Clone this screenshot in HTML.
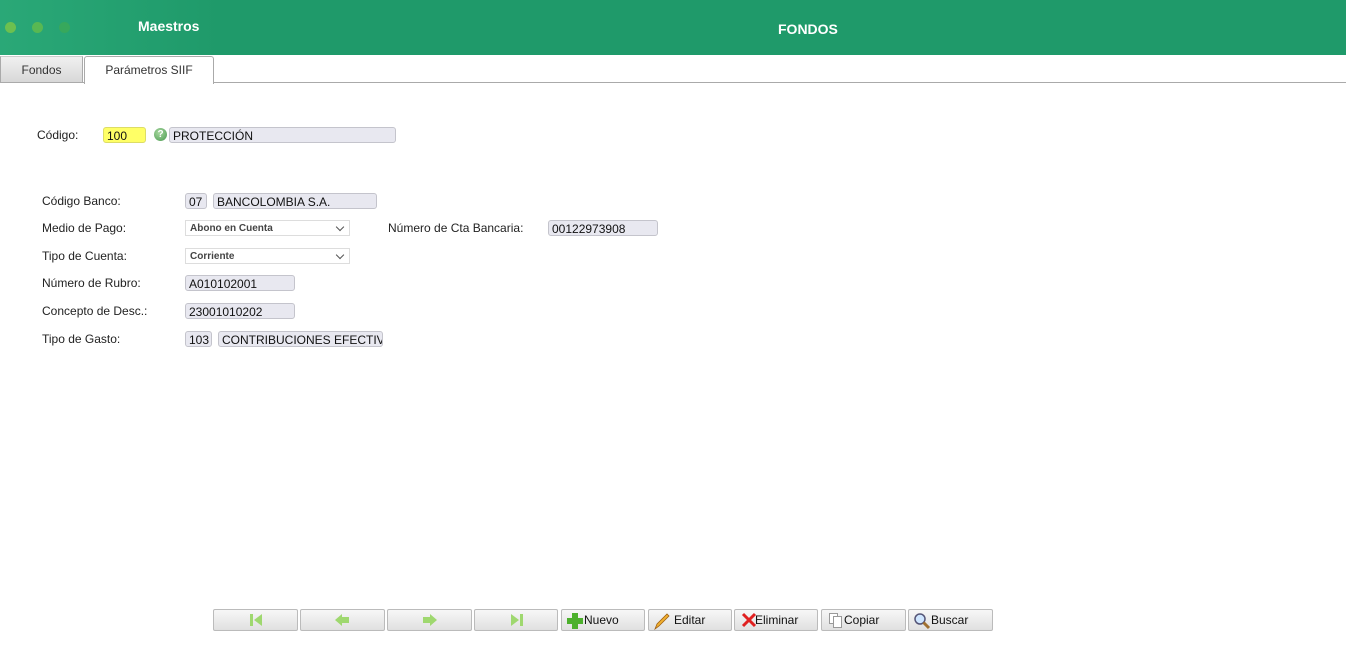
<!DOCTYPE html>
<html><head><meta charset="utf-8"><style>
body{margin:0;width:1346px;height:653px;background:#fff;font-family:"Liberation Sans","DejaVu Sans",sans-serif;font-size:12px;color:#222;position:relative;overflow:hidden}
.hdr{position:absolute;left:0;top:0;width:1346px;height:55px;background:linear-gradient(90deg,#2aa877 0,#1f9a6a 220px,#1f9a6a 100%)}
.dot{position:absolute;top:22px;width:11px;height:11px;border-radius:50%}
.t{position:absolute;color:#fff;font-weight:bold;font-size:14px}
.tab{position:absolute;top:56px;height:27px;line-height:27px;text-align:center;font-size:12px;color:#333;box-sizing:border-box}
.a{position:absolute;white-space:nowrap}
.in{position:absolute;height:16px;line-height:16px;background:#e8e8f0;border:1px solid #c4c4cc;border-radius:3px;box-sizing:border-box;padding-left:3px;font-size:12px;color:#111;white-space:nowrap;overflow:hidden}
.sel{position:absolute;height:16px;line-height:15px;border:1px solid #ddd;box-sizing:border-box;padding-left:4px;font-size:10px;font-weight:bold;color:#444;background:#fff}
.sel:after{content:"";position:absolute;right:6px;top:3px;width:5px;height:5px;border-right:1.5px solid #555;border-bottom:1.5px solid #555;transform:rotate(45deg)}
.b{position:absolute;top:609px;height:22px;border:1px solid #bbb;border-radius:2px;box-sizing:border-box;background:linear-gradient(#f7f7f7,#e0e0e0);font-size:12px;line-height:20px;color:#111}
.b svg{position:absolute;top:2px}
</style></head><body>
<div class="hdr">
<div class="dot" style="left:5px;background:#6cc04f"></div>
<div class="dot" style="left:32px;background:#58b852"></div>
<div class="dot" style="left:59px;background:#37a85c"></div>
<div class="t" style="left:138px;top:18px">Maestros</div>
<div class="t" style="left:778px;top:21px">FONDOS</div>
</div>
<div style="position:absolute;left:0;top:82px;width:1346px;height:1px;background:#aaa"></div>
<div class="tab" style="left:0;width:83px;background:linear-gradient(#f0f0f0,#d8d8d8);border:1px solid #aaa;border-top:1px solid #ccc">Fondos</div>
<div class="tab" style="left:84px;width:130px;height:28px;background:#fff;border:1px solid #aaa;border-bottom:none;border-radius:3px 3px 0 0">Parámetros SIIF</div>

<div class="a" style="left:37px;top:128px">Código:</div>
<div class="in" style="left:103px;top:127px;width:43px;background:#ffff66;border-color:#dddd66">100</div>
<div style="position:absolute;left:154px;top:128px;width:13px;height:13px;border-radius:50%;background:radial-gradient(circle at 40% 35%,#a8d8a0,#4a9a50);color:#fff;font-size:10px;font-weight:bold;text-align:center;line-height:13px">?</div>
<div class="in" style="left:169px;top:127px;width:227px">PROTECCIÓN</div>

<div class="a" style="left:42px;top:194px">Código Banco:</div>
<div class="in" style="left:185px;top:193px;width:22px">07</div>
<div class="in" style="left:213px;top:193px;width:164px">BANCOLOMBIA S.A.</div>
<div class="a" style="left:42px;top:221px">Medio de Pago:</div>
<div class="sel" style="left:185px;top:220px;width:165px">Abono en Cuenta</div>
<div class="a" style="left:388px;top:221px">Número de Cta Bancaria:</div>
<div class="in" style="left:548px;top:220px;width:110px">00122973908</div>
<div class="a" style="left:42px;top:249px">Tipo de Cuenta:</div>
<div class="sel" style="left:185px;top:248px;width:165px">Corriente</div>
<div class="a" style="left:42px;top:276px">Número de Rubro:</div>
<div class="in" style="left:185px;top:275px;width:110px">A010102001</div>
<div class="a" style="left:42px;top:304px">Concepto de Desc.:</div>
<div class="in" style="left:185px;top:303px;width:110px">23001010202</div>
<div class="a" style="left:42px;top:332px">Tipo de Gasto:</div>
<div class="in" style="left:185px;top:331px;width:27px">103</div>
<div class="in" style="left:218px;top:331px;width:165px">CONTRIBUCIONES EFECTIV</div>

<div class="b" style="left:213px;width:85px"><svg style="left:34px" width="16" height="16"><rect x="2" y="2" width="3" height="12" fill="#9fd86f"/><path d="M14 2L6 8L14 14Z" fill="#9fd86f"/></svg></div>
<div class="b" style="left:300px;width:85px"><svg style="left:33px" width="16" height="16"><path d="M1 8L8 2V5H15V11H8V14Z" fill="#9fd86f"/></svg></div>
<div class="b" style="left:387px;width:85px"><svg style="left:34px" width="16" height="16"><path d="M15 8L8 2V5H1V11H8V14Z" fill="#9fd86f"/></svg></div>
<div class="b" style="left:474px;width:84px"><svg style="left:34px" width="16" height="16"><path d="M2 2L10 8L2 14Z" fill="#9fd86f"/><rect x="11" y="2" width="3" height="12" fill="#9fd86f"/></svg></div>
<div class="b" style="left:561px;width:84px;padding-left:22px"><svg style="left:4px" width="18" height="18"><path d="M6 1H12V6H17V12H12V17H6V12H1V6H6Z" fill="#4cb02c"/></svg>Nuevo</div>
<div class="b" style="left:648px;width:84px;padding-left:25px"><svg style="left:4px" width="18" height="18"><path d="M2 17L4 12L14 2L16 4L6 14Z" fill="#f0b030" stroke="#a06010" stroke-width=".8"/></svg>Editar</div>
<div class="b" style="left:734px;width:84px;padding-left:20px"><svg style="left:6px" width="16" height="16"><path d="M2 2L14 14M14 2L2 14" stroke="#e02020" stroke-width="3"/></svg>Eliminar</div>
<div class="b" style="left:821px;width:85px;padding-left:22px"><svg style="left:6px" width="16" height="16"><rect x="1.5" y="1.5" width="8" height="10" fill="#fff" stroke="#999"/><rect x="5.5" y="4.5" width="8" height="11" fill="#fff" stroke="#999"/></svg>Copiar</div>
<div class="b" style="left:908px;width:85px;padding-left:22px"><svg style="left:4px" width="18" height="18"><circle cx="7" cy="7" r="5" fill="#cfe6ff" stroke="#557" stroke-width="1.5"/><path d="M10.5 10.5L16 16" stroke="#a07030" stroke-width="3"/></svg>Buscar</div>
</body></html>
